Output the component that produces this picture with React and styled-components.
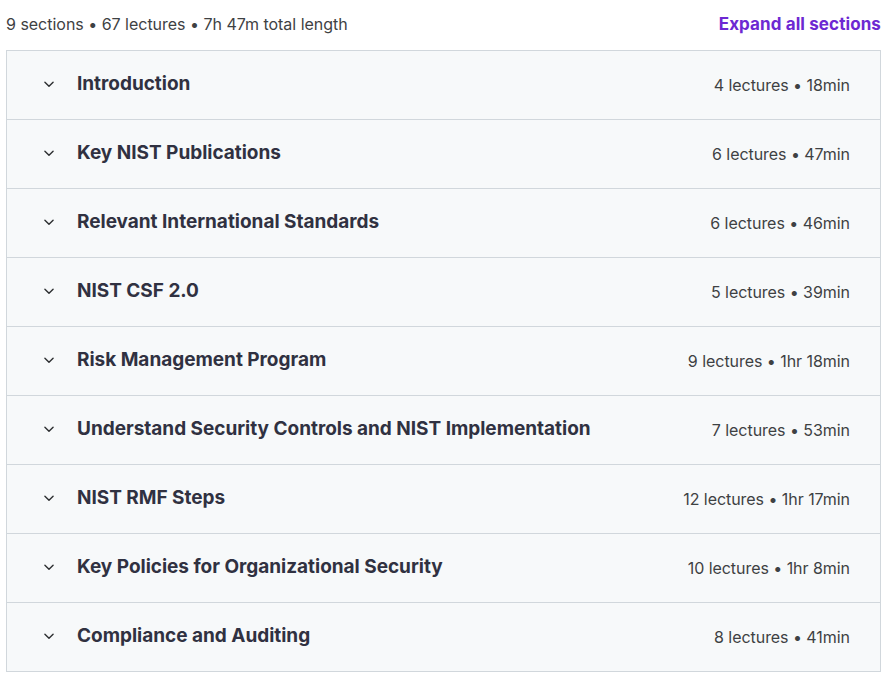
import React from "react";
import styled, { createGlobalStyle } from "styled-components";

const sections = [
  { title: "Introduction", meta: "4 lectures • 18min" },
  { title: "Key NIST Publications", meta: "6 lectures • 47min" },
  { title: "Relevant International Standards", meta: "6 lectures • 46min" },
  { title: "NIST CSF 2.0", meta: "5 lectures • 39min" },
  { title: "Risk Management Program", meta: "9 lectures • 1hr 18min" },
  { title: "Understand Security Controls and NIST Implementation", meta: "7 lectures • 53min" },
  { title: "NIST RMF Steps", meta: "12 lectures • 1hr 17min" },
  { title: "Key Policies for Organizational Security", meta: "10 lectures • 1hr 8min" },
  { title: "Compliance and Auditing", meta: "8 lectures • 41min" },
];

const Chevron = () => (
  <svg width="14" height="14" viewBox="0 0 24 24" fill="none" stroke="currentColor" strokeWidth="2.4" strokeLinecap="round" strokeLinejoin="round">
    <path d="M5 9l7 7 7-7" />
  </svg>
);

const App = () => {
  return (
    <>
      <GlobalStyle />
      <Page>
        <Header>
          <Summary>9 sections • 67 lectures • 7h 47m total length</Summary>
          <ExpandButton>Expand all sections</ExpandButton>
        </Header>
        <List>
          {sections.map((s) => (
            <Row key={s.title}>
              <Left>
                <IconWrap>
                  <Chevron />
                </IconWrap>
                <Title>{s.title}</Title>
              </Left>
              <Meta>{s.meta}</Meta>
            </Row>
          ))}
        </List>
      </Page>
    </>
  );
};

export default App;

const GlobalStyle = createGlobalStyle`
  body {
    margin: 0;
    background: #fff;
    font-family: Inter, "Noto Sans", sans-serif;
  }
`;

const Page = styled.div`
  width: 875px;
  padding: 0 6px;
`;

const Header = styled.div`
  height: 50px;
  display: flex;
  align-items: center;
  justify-content: space-between;
  padding-bottom: 2px;
  box-sizing: border-box;
`;

const Summary = styled.span`
  font-size: 16px;
  color: #3e4143;
  letter-spacing: -0.02px;
`;

const ExpandButton = styled.button`
  background: none;
  border: none;
  padding: 0;
  font-family: inherit;
  font-size: 17px;
  font-weight: 700;
  color: #6d28d2;
  letter-spacing: 0.1px;
  cursor: pointer;
`;

const List = styled.div`
  border: 1px solid #d1d7dc;
  border-bottom: none;
`;

const Row = styled.div`
  height: 69px;
  box-sizing: border-box;
  border-bottom: 1px solid #d1d7dc;
  background: #f7f9fa;
  display: flex;
  align-items: center;
  justify-content: space-between;
  padding: 0 30px 0 35px;
`;

const Left = styled.div`
  display: flex;
  align-items: center;
  gap: 21px;
`;

const IconWrap = styled.span`
  display: flex;
  color: #2d2f31;
  margin-bottom: 2px;
`;

const Title = styled.span`
  font-size: 19px;
  font-weight: 700;
  color: #303141;
  letter-spacing: -0.02px;
  margin-bottom: 4px;
`;

const Meta = styled.span`
  font-size: 16px;
  color: #3e4143;
  letter-spacing: -0.05px;
`;
